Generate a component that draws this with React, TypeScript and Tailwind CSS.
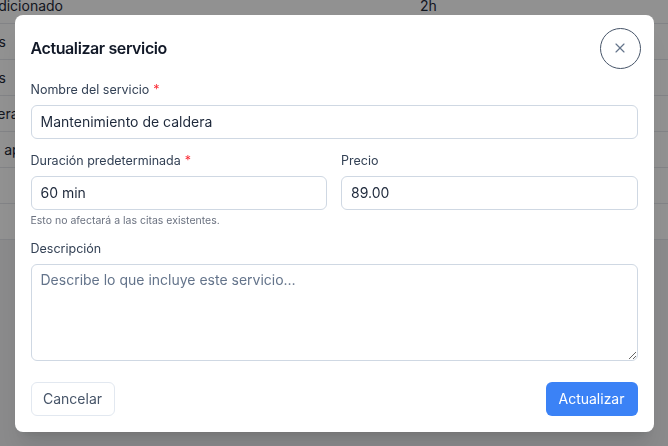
import { X } from 'lucide-react'

const rows = [
  { name: 'Revisión de aire acondicionado', time: '2h', box: 'w-[263px]' },
  { name: 'Limpieza de filtros', time: '1h 30min', box: 'w-[206px]' },
  { name: 'Cambio de bombas', time: '1h', box: 'w-[206px]' },
  { name: 'Revisión general', time: '3h', box: 'w-[222px]' },
  { name: 'Instalación de aparatos', time: '1h', box: 'w-[262px]' },
  { name: 'Mantenimiento de caldera', time: '1h', box: 'w-[195px]' },
  { name: 'Cambio de termostato', time: '45min', box: 'w-[195px]' },
]

const inputClass =
  'h-[34px] px-[9px] rounded-md border border-[#cfd8e3] text-[14px] text-[#1e293b] outline-none'

function Field({
  label,
  required,
  children,
}: {
  label: string
  required?: boolean
  children: React.ReactNode
}) {
  return (
    <div className="flex flex-col">
      <label className="text-[12.5px] leading-[18px] text-[#334155] mb-1.5">
        {label}
        {required && <span className="text-red-500 ml-1">*</span>}
      </label>
      {children}
    </div>
  )
}

export default function App() {
  return (
    <div
      className="relative w-[668px] h-[446px] overflow-hidden bg-[#f2f3f5] text-[#334155]"
      style={{ fontFamily: 'Inter, "Noto Sans", sans-serif' }}
    >
      {/* Background table */}
      <div className="-mt-[12px] bg-white">
        {rows.map((row) => (
          <div key={row.name} className="h-9 flex items-center border-b border-[#e5e7eb] text-sm text-[#1f2937]">
            <div className="-ml-[200px] w-[620px] shrink-0">
              <div className={`whitespace-nowrap text-right ${row.box}`}>{row.name}</div>
            </div>
            <div className="text-[#1e293b]">{row.time}</div>
          </div>
        ))}
      </div>

      {/* Overlay */}
      <div className="fixed inset-0 bg-black/43 flex items-center justify-center">
        <div className="w-[639px] bg-white rounded-lg shadow-xl px-4 pt-[13px] pb-4">
          {/* Header */}
          <div className="flex items-center justify-between -mr-[3px]">
            <h2 className="text-base font-semibold text-[#111827] tracking-tight">Actualizar servicio</h2>
            <button className="w-[41px] h-[41px] rounded-full border border-[#475569] flex items-center justify-center text-[#64748b]">
              <X className="w-4 h-4" strokeWidth={1.75} />
            </button>
          </div>

          <div className="mt-3 flex flex-col">
            <Field label="Nombre del servicio" required>
              <input defaultValue="Mantenimiento de caldera" className={inputClass} />
            </Field>

            <div className="mt-[13px] grid grid-cols-2 gap-[14px]">
              <div>
                <Field label="Duración predeterminada" required>
                  <input defaultValue="60 min" className={inputClass} />
                </Field>
                <p className="mt-1 text-[10.5px] leading-[14px] text-[#6b7280]">
                  Esto no afectará a las citas existentes.
                </p>
              </div>
              <Field label="Precio">
                <input defaultValue="89.00" className={inputClass} />
              </Field>
            </div>

            <div className="mt-[12px]">
              <Field label="Descripción">
                <textarea
                  placeholder="Describe lo que incluye este servicio…"
                  className="h-[97px] px-[9px] py-[5px] rounded-md border border-[#cfd8e3] text-[14px] leading-5 text-[#1e293b] placeholder:text-[#64748b] outline-none"
                />
              </Field>
            </div>
          </div>

          {/* Footer */}
          <div className="mt-[21px] flex items-center justify-between">
            <button className="h-[34px] w-[84px] rounded-md border border-[#e2e8f0] text-[14px] text-[#475569]">
              Cancelar
            </button>
            <button className="h-[34px] w-[92px] rounded-md bg-[#3b82f6] text-[14px] text-white">
              Actualizar
            </button>
          </div>
        </div>
      </div>
    </div>
  )
}
